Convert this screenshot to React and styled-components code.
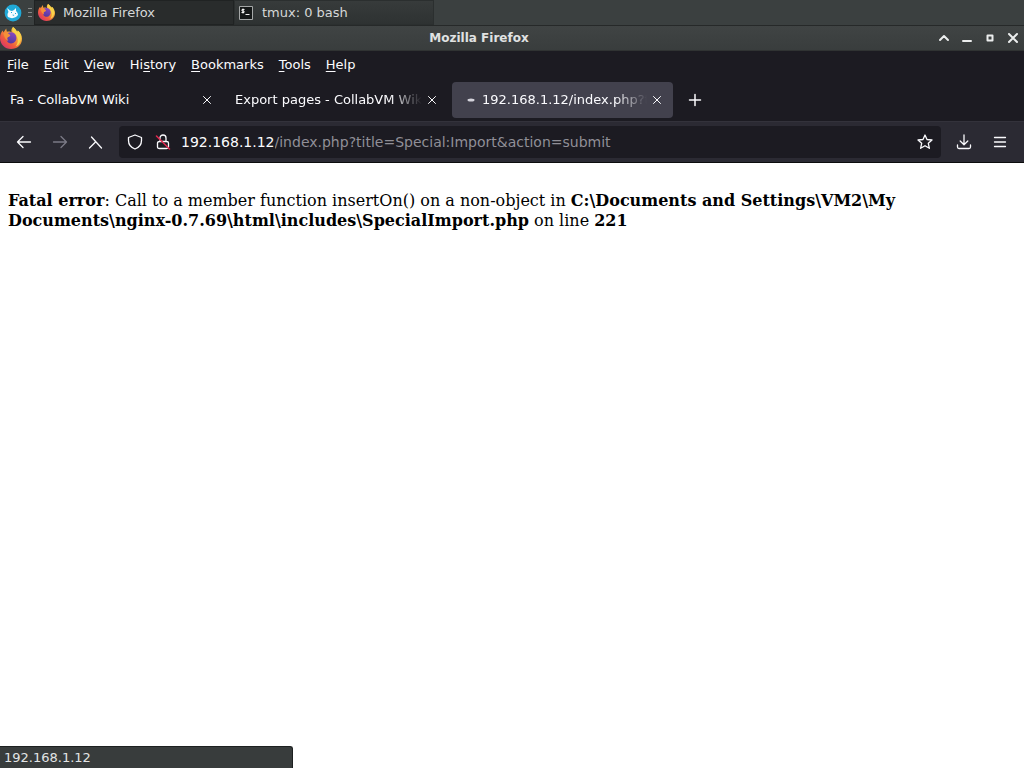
import React, { useId } from 'react';
import styled, { createGlobalStyle } from 'styled-components';

const GlobalStyle = createGlobalStyle`
  * { box-sizing: border-box; }
  html, body, #root { height: 100%; }
  body {
    margin: 0;
    background: #fff;
    font-family: "DejaVu Sans", sans-serif;
    font-size: 13px;
  }
  button, input { font: inherit; color: inherit; }
  button { padding: 0; border: 0; background: none; cursor: pointer; }
  svg { display: block; flex: none; }
`;

const Desktop = styled.div`
  display: flex;
  flex-direction: column;
  min-height: 100%;
`;

const Taskbar = styled.nav`
  display: flex;
  height: 26px;
  background: #3b4040;
  border-bottom: 1px solid #262929;
  color: #d6d8d8;
`;

const StartButton = styled.button`
  display: flex;
  align-items: center;
  justify-content: center;
  width: 26px;
`;

const Handle = styled.div`
  display: flex;
  flex-direction: column;
  justify-content: center;
  gap: 3px;
  width: 8px;
  padding: 0 2px;
`;

const HandleLine = styled.span`
  height: 1px;
  background: #858888;
`;

const TaskButton = styled.button`
  display: flex;
  align-items: center;
  gap: 8px;
  width: 200px;
  height: 25px;
  padding: 0 3px;
  border: 1px solid ${p => (p.$active ? '#202323' : '#2b2f2f')};
  background: ${p => (p.$active ? '#292c2c' : 'linear-gradient(#373b3b, #2e3232)')};
`;

const TitleBar = styled.header`
  display: flex;
  align-items: center;
  height: 25px;
  background: linear-gradient(#404444, #393d3d);
  border-bottom: 1px solid #303333;
  color: #e0e2e2;
`;

const WindowTitle = styled.h1`
  flex: 1;
  margin: 0;
  padding-left: 4px;
  font-size: 12px;
  line-height: 24px;
  text-align: center;
`;

const WindowControls = styled.div`
  display: flex;
  color: #eceeee;
`;

const WindowButton = styled.button`
  display: flex;
  align-items: center;
  justify-content: center;
  width: 23px;
  height: 24px;
`;

const MenuBar = styled.nav`
  display: flex;
  align-items: center;
  gap: 1px;
  height: 27px;
  background: #1c1b22;
  color: #fbfbfe;
`;

const MenuButton = styled.button`
  height: 27px;
  padding: 0 7px;
  line-height: 26px;
  white-space: nowrap;
`;

const Mnemonic = styled.span`
  text-decoration: underline;
  text-underline-offset: 2px;
`;

const TabStrip = styled.div`
  display: flex;
  align-items: center;
  gap: 4px;
  height: 43px;
  padding: 0 2px;
  background: #1c1b22;
  color: #fbfbfe;
`;

const Tab = styled.div`
  display: flex;
  align-items: center;
  gap: 2px;
  flex: 0 1 221px;
  min-width: 0;
  height: 36px;
  padding: 0 8px;
  border-radius: 4px;
  background: ${p => (p.$active ? '#42414d' : 'transparent')};
`;

const TabTitle = styled.button`
  flex: 1;
  min-width: 0;
  overflow: hidden;
  text-align: left;
  line-height: 20px;
  white-space: nowrap;
  mask-image: ${p => (p.$fade ? 'linear-gradient(to left, transparent, #000 32px)' : 'none')};
`;

const TabClose = styled.button`
  display: flex;
  align-items: center;
  justify-content: center;
  flex: none;
  width: 16px;
  height: 24px;
`;

const NewTab = styled.button`
  display: flex;
  align-items: center;
  justify-content: center;
  width: 36px;
  height: 36px;
`;

const Toolbar = styled.div`
  display: flex;
  align-items: center;
  height: 42px;
  padding: 0 6px;
  background: #2b2a33;
  border-top: 1px solid #33323b;
  border-bottom: 1px solid #0c0c0d;
  color: #fbfbfe;
`;

const ToolButton = styled.button`
  display: flex;
  align-items: center;
  justify-content: center;
  width: 36px;
  height: 32px;
  &:disabled { color: #7b7a86; }
`;

const AddressBar = styled.form`
  display: flex;
  align-items: center;
  flex: 1;
  min-width: 0;
  height: 32px;
  margin: 0 5px;
  padding: 0 2px;
  border-radius: 4px;
  background: #1c1b22;
  font-size: 14px;
`;

const AddressButton = styled.button`
  display: flex;
  align-items: center;
  justify-content: center;
  flex: none;
  width: 28px;
  height: 28px;
`;

const Host = styled.label`
  padding-left: 4px;
  line-height: 20px;
`;

const AddressInput = styled.input`
  flex: 1;
  min-width: 0;
  height: 20px;
  padding: 0;
  border: 0;
  outline: 0;
  background: none;
  color: #908f97;
`;

const Page = styled.main`
  flex: 1;
  padding: 28px 8px 8px;
  background: #fff;
  color: #000;
  font-family: "DejaVu Serif", serif;
  font-size: 16px;
  line-height: 20px;
`;

const ErrorText = styled.p`
  margin: 0;
`;

const StatusPanel = styled.footer`
  position: fixed;
  bottom: 0;
  left: 0;
  width: 293px;
  height: 22px;
  padding: 0 4px;
  border-top: 1px solid #1d2020;
  border-right: 1px solid #1d2020;
  border-top-right-radius: 3px;
  background: #383c3c;
  color: #e2e4e4;
  line-height: 21px;
`;

function FirefoxLogo({ size }) {
  const id = useId();
  return (
    <svg width={size} height={size} viewBox="0 0 32 32" aria-hidden="true">
      <defs>
        <linearGradient id={`${id}f`} x1="0.85" y1="0.1" x2="0.15" y2="0.9">
          <stop offset="0" stopColor="#f5d84a" />
          <stop offset="0.4" stopColor="#f5983a" />
          <stop offset="0.7" stopColor="#f05a3e" />
          <stop offset="1" stopColor="#d8366a" />
        </linearGradient>
        <linearGradient id={`${id}p`} x1="0.6" y1="0" x2="0.3" y2="1">
          <stop offset="0" stopColor="#8a48c0" />
          <stop offset="1" stopColor="#5238a0" />
        </linearGradient>
      </defs>
      <path fill={`url(#${id}f)`} d="M19 0c3 2 5 5 6 7l1-2c4 3 6 8 6 12 0 9-7 15-16 15S0 25 0 16c0-5 2-9 4-11l1 3 4-6 1 5c3-1 6 0 7 1-1-4 0-6 2-8z" />
      <path fill={`url(#${id}p)`} d="M11 9c3-2 8-2 11 1 2 3 3 8 0 11-3 4-10 4-12-1-1-2 0-4 1-5l3-2c1-2-1-3-3-4z" />
      <path fill="#f59038" d="M5 9c3-2 6-1 8 2l2 1c0 2-3 2-4 3-1 2 0 3 1 5-4-1-6-6-7-11z" />
      <path fill="#f8d24a" d="M19 0c3 2 5 5 6 8l1-3c5 5 6 13 2 19-1 2-3 3-5 4 3-4 4-9 2-13-1-4-4-6-6-8-1-3-1-5 0-7z" />
    </svg>
  );
}

function XfceLogo() {
  return (
    <svg width="18" height="18" viewBox="0 0 18 18" aria-hidden="true">
      <circle cx="9" cy="9" r="8.4" fill="#20a9d8" />
      <path fill="#f5fcff" d="M3 4l3 2.500 2 .5 2-1 2-2v3c1 1 2 2 2 4l-2 2c-3 1.500-5 1.500-8 0C3 11.500 3.500 9 4.500 8z" />
      <path fill="#20a9d8" d="M7 8h1v1H7zM11 9h1v1h-1zM8.500 10.500l2 .5-1.500 1z" />
    </svg>
  );
}

function TerminalIcon() {
  return (
    <svg width="16" height="16" viewBox="0 0 16 16" aria-hidden="true">
      <path fill="#151818" stroke="#a5a8a8" d="M1.5 1.5h13v13h-13z" />
      <path fill="none" stroke="#f2f2f2" d="M6.500 4.500h-2.500v1.500h2v1.500H3.500M5 3.500v5M7.500 9.500h4" />
    </svg>
  );
}

function Stroke({ d, size = 16, width = 1.3, children }) {
  return (
    <svg
      width={size} height={size} viewBox={`0 0 ${size} ${size}`} fill="none"
      stroke="currentColor" strokeWidth={width} strokeLinecap="round" strokeLinejoin="round"
      aria-hidden="true"
    >
      <path d={d} />
      {children}
    </svg>
  );
}

function CloseIcon() {
  return <Stroke size={10} width={1} d="M1.500 1.500l7 7M8.500 1.500l-7 7" />;
}

const menus = [
  ['', 'F', 'ile'], ['', 'E', 'dit'], ['', 'V', 'iew'], ['Hi', 's', 'tory'],
  ['', 'B', 'ookmarks'], ['', 'T', 'ools'], ['', 'H', 'elp'],
];

const tabs = [
  { title: 'Fa - CollabVM Wiki' },
  { title: 'Export pages - CollabVM Wiki', fade: true },
  { title: '192.168.1.12/index.php?title', fade: true, active: true },
];

export default function App() {
  return (
    <Desktop>
      <GlobalStyle />
      <Taskbar>
        <StartButton aria-label="Applications"><XfceLogo /></StartButton>
        <Handle><HandleLine /><HandleLine /><HandleLine /></Handle>
        <TaskButton $active><FirefoxLogo size={17} />Mozilla Firefox</TaskButton>
        <TaskButton><TerminalIcon />tmux: 0 bash</TaskButton>
      </Taskbar>

      <TitleBar>
        <FirefoxLogo size={22} />
        <WindowTitle>Mozilla Firefox</WindowTitle>
        <WindowControls>
          <WindowButton aria-label="Roll up">
            <Stroke size={12} width={2} d="M2 8l4-4 4 4" />
          </WindowButton>
          <WindowButton aria-label="Minimize">
            <Stroke size={12} width={2} d="M2 9h8" />
          </WindowButton>
          <WindowButton aria-label="Maximize">
            <Stroke size={12} width={2} d="M3.500 3.500h5v5h-5z" />
          </WindowButton>
          <WindowButton aria-label="Close">
            <Stroke size={12} width={2} d="M2 2l8 8M10 2l-8 8" />
          </WindowButton>
        </WindowControls>
      </TitleBar>

      <MenuBar>
        {menus.map(([before, key, after]) => (
          <MenuButton key={before + key}>{before}<Mnemonic>{key}</Mnemonic>{after}</MenuButton>
        ))}
      </MenuBar>

      <TabStrip>
        {tabs.map(tab => (
          <Tab key={tab.title} $active={tab.active}>
            {tab.active && (
              <svg width="20" height="16" viewBox="0 0 20 16" aria-hidden="true">
                <ellipse cx="11" cy="8" rx="3.500" ry="1.500" fill="#d5d4dc" />
              </svg>
            )}
            <TabTitle $fade={tab.fade}>{tab.title}</TabTitle>
            <TabClose aria-label="Close tab"><CloseIcon /></TabClose>
          </Tab>
        ))}
        <NewTab aria-label="New tab"><Stroke width={1.5} d="M8 2.500v11M2.500 8h11" /></NewTab>
      </TabStrip>

      <Toolbar>
        <ToolButton aria-label="Back"><Stroke width={1.300} d="M14.500 8H1.500M7 2.500L1.500 8 7 13.500" /></ToolButton>
        <ToolButton aria-label="Forward" disabled><Stroke width={1.300} d="M1.500 8h13M9 2.500L14.500 8 9 13.500" /></ToolButton>
        <ToolButton aria-label="Stop"><Stroke width={1.300} d="M3.500 3L13.500 14M1.500 14L7.500 8" /></ToolButton>
        <AddressBar onSubmit={e => e.preventDefault()}>
          <AddressButton type="button" aria-label="Tracking protection">
            <Stroke d="M8 1l6.500 2.500v3c0 4-2.500 7-6.500 8.500-4-1.500-6.500-4.500-6.500-8.500v-3z" />
          </AddressButton>
          <AddressButton type="button" aria-label="Connection not secure">
            <Stroke d="M4.500 7.500h7c1 0 2 .5 2 1.500v4c0 1-1 1.500-2 1.500h-7c-1 0-2-.5-2-1.500V9c0-1 1-1.500 2-1.500zM5 7V4c0-4 6-4 6 0v3">
              <path d="M1.500 2L14.500 15" stroke="#e22850" strokeWidth="1.500" />
            </Stroke>
          </AddressButton>
          <Host htmlFor="address">192.168.1.12</Host>
          <AddressInput id="address" spellCheck={false} defaultValue="/index.php?title=Special:Import&action=submit" />
          <AddressButton type="button" aria-label="Bookmark this page">
            <Stroke d="M8 1l2 4.500 5 .5-3.700 3.300 1.100 5L8 11.700l-4.400 2.600 1.100-5L1 6l5-.5z" />
          </AddressButton>
        </AddressBar>
        <ToolButton aria-label="Downloads">
          <Stroke width={1.300} d="M8 1v9.500M4.200 7L8 10.700 11.800 7M1.500 11v2c0 1 .5 1.500 1.500 1.500h10c1 0 1.500-.5 1.500-1.500v-2" />
        </ToolButton>
        <ToolButton aria-label="Application menu">
          <Stroke d="M2.500 3.500h11M2.500 8h11M2.500 12.500h11" />
        </ToolButton>
      </Toolbar>

      <Page>
        <ErrorText>
          <b>Fatal error</b>: Call to a member function insertOn() on a non-object in{' '}
          <b>C:\Documents and Settings\VM2\My Documents\nginx-0.7.69\html\includes\SpecialImport.php</b>{' '}
          on line <b>221</b>
        </ErrorText>
      </Page>
      <StatusPanel>192.168.1.12</StatusPanel>
    </Desktop>
  );
}
